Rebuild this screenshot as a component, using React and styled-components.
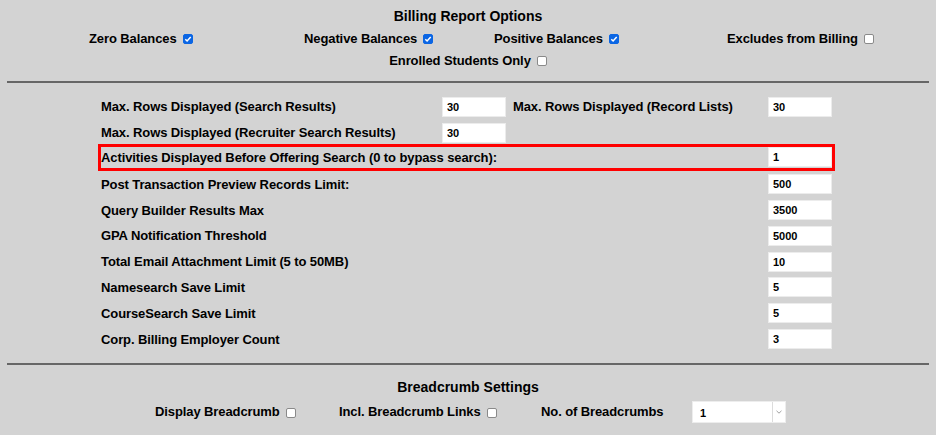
import React from "react";
import styled, { createGlobalStyle } from "styled-components";

const GlobalStyle = createGlobalStyle`
  html, body {
    margin: 0;
    padding: 0;
    background: #d3d3d3;
  }
  body {
    font-family: "Liberation Sans", Arial, sans-serif;
    color: #000;
  }
`;

const Page = styled.div`
  padding: 0 7px;
`;

const Section = styled.section`
  padding-top: ${(props) => props.top || 0}px;
`;

const Title = styled.div`
  font-size: 14px;
  font-weight: bold;
  line-height: 21px;
  text-align: center;
`;

const OptionGrid = styled.div`
  display: grid;
  grid-template-columns: ${(props) => props.cols};
  padding-left: ${(props) => props.indent}px;
  height: ${(props) => props.h || 22}px;
  align-items: center;
`;

const OptionCenter = styled.div`
  display: flex;
  justify-content: center;
  align-items: center;
  height: 22px;
`;

const Option = styled.label`
  display: inline-flex;
  align-items: center;
  font-size: 13px;
  font-weight: bold;
  letter-spacing: -0.1px;
  white-space: nowrap;
`;

const Box = styled.span`
  display: inline-flex;
  align-items: center;
  justify-content: center;
  box-sizing: border-box;
  width: 10px;
  height: 10px;
  margin-left: ${(props) => props.gap || 6}px;
  margin-top: 2px;
  border-radius: 2px;
  background: ${(props) => (props.checked ? "#0b66e4" : "#fff")};
  border: 1px solid ${(props) => (props.checked ? "#0b66e4" : "#8a8a8a")};
`;

const Divider = styled.hr`
  margin: ${(props) => props.gap || 0}px 0 0;
  height: 0;
  border: 0;
  border-top: 2px solid #666;
`;

const Settings = styled.div`
  padding: 11px 97px 11px 94px;
`;

const Row = styled.div`
  display: grid;
  grid-template-columns: 341px 64px 262px 64px;
  align-items: center;
  height: 25.8px;
  font-size: 13px;
  font-weight: bold;
  letter-spacing: -0.1px;
  white-space: nowrap;
  ${(props) =>
    props.highlight &&
    `
    box-sizing: border-box;
    height: 27.8px;
    margin: -2px -3px 0 -3px;
    border: 3px solid #ff0000;
  `}
`;

const Label = styled.span`
  grid-column: ${(props) => props.span || "auto"};
  padding-left: ${(props) => props.pad || 0}px;
`;

const Field = styled.input`
  grid-column: ${(props) => props.col || "auto"};
  box-sizing: border-box;
  width: 64px;
  height: 20px;
  margin: 0;
  padding: 0 0 0 4px;
  border: 1px solid #ececec;
  background: #fff;
  font-family: "Liberation Sans", Arial, sans-serif;
  font-size: 11px;
  font-weight: bold;
  color: #000;
  outline: none;
`;

const Select = styled.div`
  display: flex;
  width: 94px;
  height: 22px;
  background: #fff;
  box-sizing: border-box;
  border: 1px solid #ededed;
`;

const SelectValue = styled.span`
  flex: 1;
  display: flex;
  align-items: center;
  padding-left: 7px;
  padding-top: 2px;
  font-size: 11px;
  font-weight: bold;
`;

const SelectArrow = styled.span`
  width: 12px;
  display: flex;
  align-items: center;
  justify-content: center;
  border-left: 1px solid #dcdcdc;
`;

function Check({ checked, gap }) {
  return (
    <Box checked={checked} gap={gap}>
      {checked && (
        <svg width="8" height="8" viewBox="0 0 8 8">
          <polyline
            points="1.3,4.2 3.1,6 6.7,2"
            fill="none"
            stroke="#fff"
            strokeWidth="1.5"
          />
        </svg>
      )}
    </Box>
  );
}

const limits = [
  ["Post Transaction Preview Records Limit:", "500"],
  ["Query Builder Results Max", "3500"],
  ["GPA Notification Threshold", "5000"],
  ["Total Email Attachment Limit (5 to 50MB)", "10"],
  ["Namesearch Save Limit", "5"],
  ["CourseSearch Save Limit", "5"],
  ["Corp. Billing Employer Count", "3"],
];

export default function App() {
  return (
    <Page>
      <GlobalStyle />
      <Section top={6}>
        <Title>Billing Report Options</Title>
        <OptionGrid cols="215px 190px 233px auto" indent={82}>
          <Option>
            Zero Balances <Check checked />
          </Option>
          <Option>
            Negative Balances <Check checked />
          </Option>
          <Option>
            Positive Balances <Check checked />
          </Option>
          <Option>
            Excludes from Billing <Check />
          </Option>
        </OptionGrid>
        <OptionCenter>
          <Option>
            Enrolled Students Only <Check />
          </Option>
        </OptionCenter>
      </Section>
      <Divider gap={10} />
      <Settings>
        <Row>
          <Label>Max. Rows Displayed (Search Results)</Label>
          <Field defaultValue="30" />
          <Label pad={7}>Max. Rows Displayed (Record Lists)</Label>
          <Field defaultValue="30" />
        </Row>
        <Row>
          <Label>Max. Rows Displayed (Recruiter Search Results)</Label>
          <Field defaultValue="30" />
        </Row>
        <Row highlight>
          <Label span="1 / 4">
            Activities Displayed Before Offering Search (0 to bypass search):
          </Label>
          <Field col="4" defaultValue="1" />
        </Row>
        {limits.map(([text, value]) => (
          <Row key={text}>
            <Label span="1 / 4">{text}</Label>
            <Field col="4" defaultValue={value} />
          </Row>
        ))}
      </Settings>
      <Divider />
      <Section top={12}>
        <Title>Breadcrumb Settings</Title>
        <OptionGrid cols="184px 202px 151px auto" indent={148} h={28}>
          <Option>
            Display Breadcrumb <Check />
          </Option>
          <Option>
            Incl. Breadcrumb Links <Check />
          </Option>
          <Option>No. of Breadcrumbs</Option>
          <Select>
            <SelectValue>1</SelectValue>
            <SelectArrow>
              <svg width="6" height="4" viewBox="0 0 6 4">
                <polyline
                  points="0.5,0.8 3,3.2 5.5,0.8"
                  fill="none"
                  stroke="#a0a0a0"
                  strokeWidth="1"
                />
              </svg>
            </SelectArrow>
          </Select>
        </OptionGrid>
      </Section>
    </Page>
  );
}
